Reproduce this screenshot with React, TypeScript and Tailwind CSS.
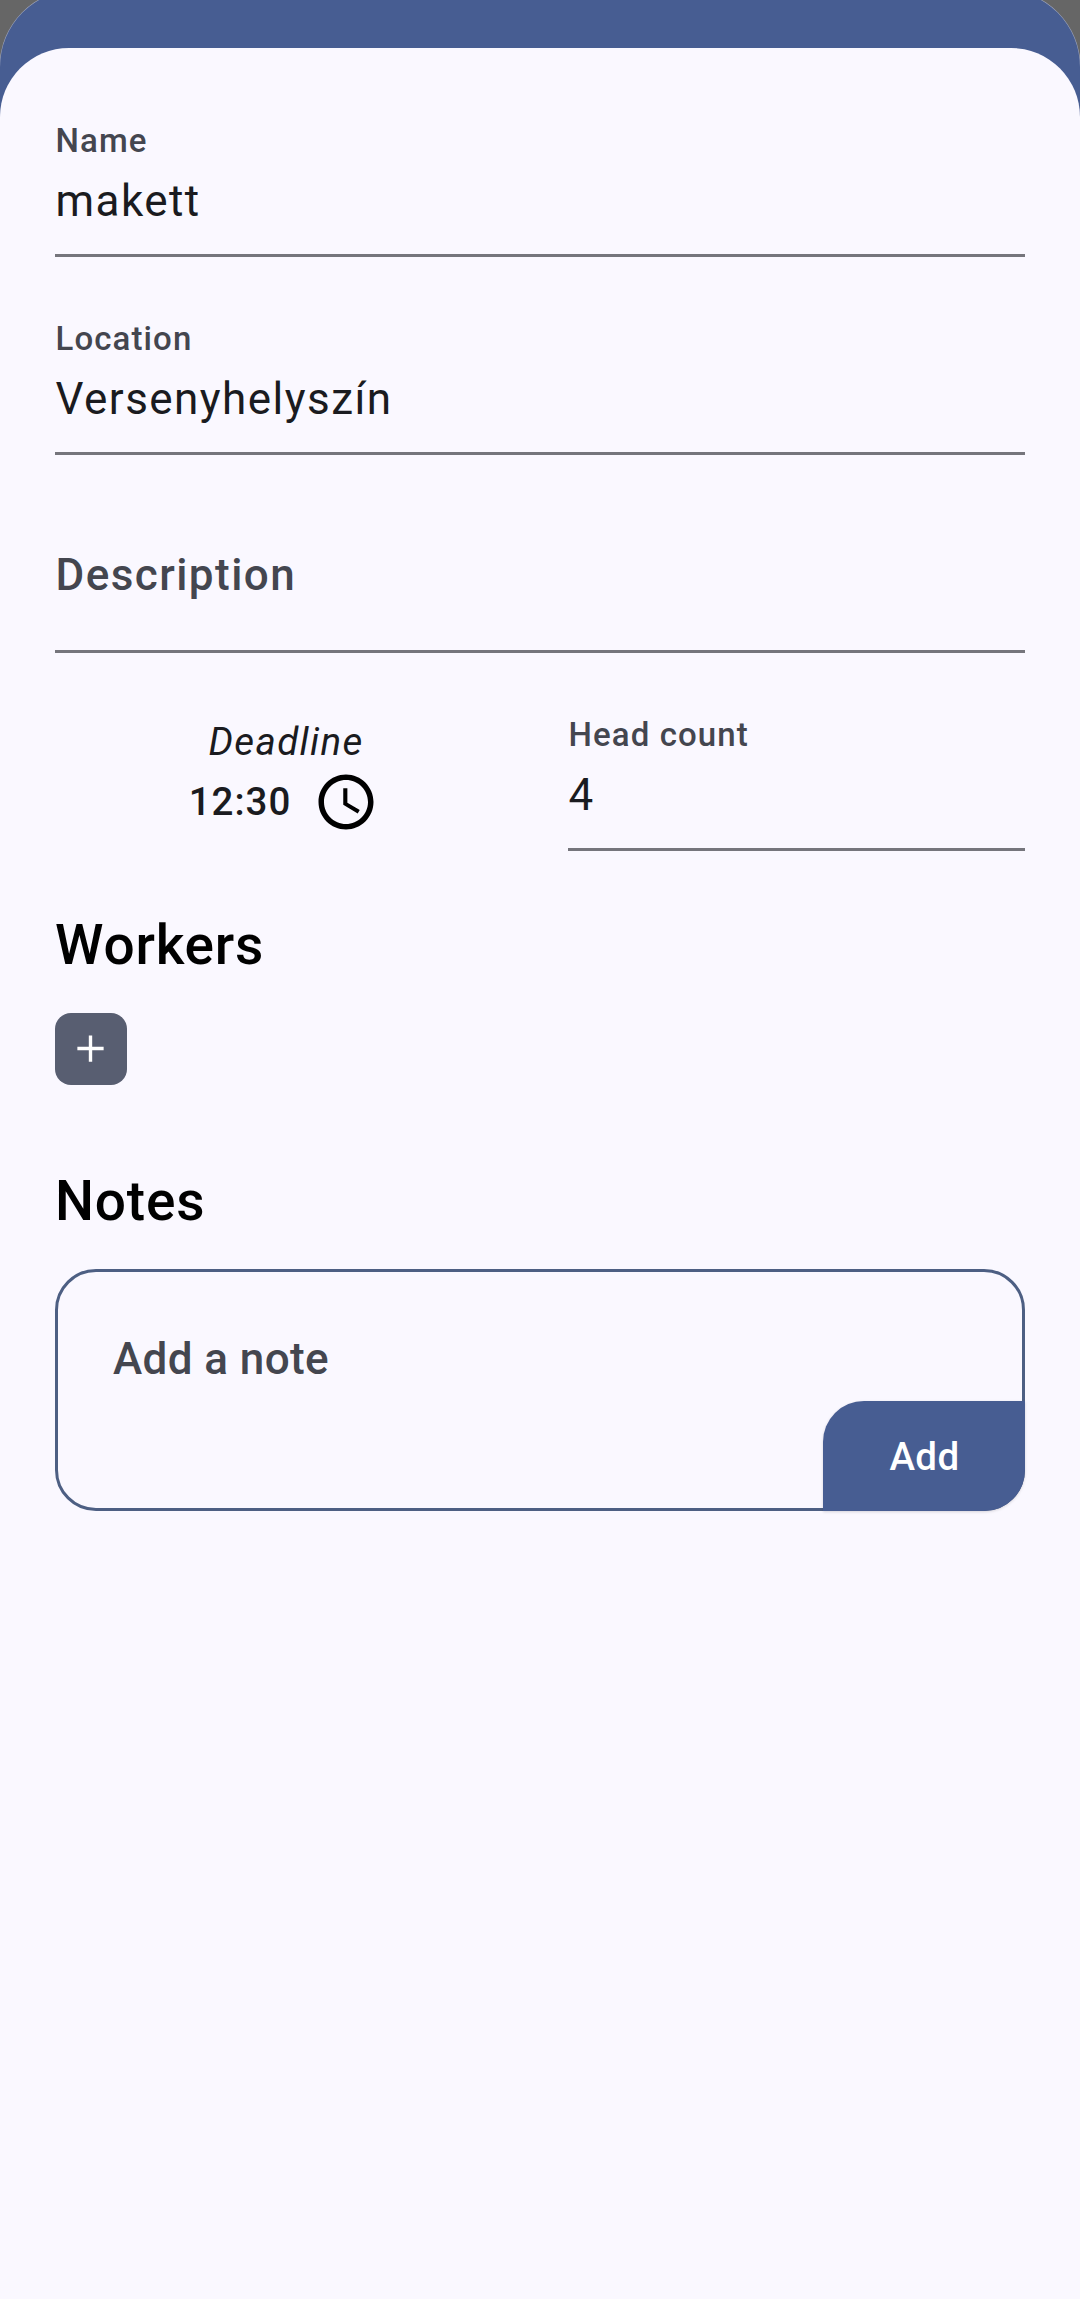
import React from "react";

function Field({ label, value, className = "" }: { label: string; value: string; className?: string }) {
  return (
    <div className={"flex h-[150px] flex-col border-b-[3px] border-[#75757c] pt-[10px] " + className}>
      <span className="h-[48px] pl-[0.5px] text-[33px] leading-[48px] font-medium tracking-[1.1px] text-[#44464f]">{label}</span>
      <span className="mt-[3px] h-[66px] pl-[0.5px] text-[44px] leading-[66px] tracking-[1.45px] text-[#1a1b20]">{value}</span>
    </div>
  );
}

export default function App() {
  return (
    <div className="flow-root h-[2299px] w-[1080px] overflow-hidden bg-[#666666] font-[Roboto,sans-serif] text-black">
      <div className="-mt-[10px] h-[2309px] rounded-t-[77px] bg-[#475d92] pt-[58px] shadow-[0_0_0_0.5px_#a5abc0]">
        <main className="h-[2251px] rounded-t-[69px] bg-[#faf8ff] px-[55px] pt-[59px]">
          <Field label="Name" value="makett" />
          <Field label="Location" value="Versenyhelyszín" className="mt-[48px]" />
          <div className="mt-[48px] flex h-[150px] items-center border-b-[3px] border-[#75757c] pb-[3px] pl-[0.5px] text-[44px] font-medium tracking-[1.45px] text-[#44464f]">Description</div>
          <div className="mt-[48px] flex justify-between">
            <div className="flex w-[458px] flex-col items-center pt-[11px]">
              <span className="h-[57px] pl-[4px] text-[38.5px] leading-[60px] tracking-[1.35px] text-[#1a1b20] italic">Deadline</span>
              <div className="flex items-center gap-[22px]">
                <span className="text-[38.5px] font-medium tracking-[1px] text-[#1a1b20]">12:30</span>
                <svg className="size-[66px]" viewBox="0 0 24 24"><path d="M11.99 2C6.47 2 2 6.48 2 12s4.47 10 9.99 10C17.52 22 22 17.52 22 12S17.52 2 11.99 2zM12 20c-4.42 0-8-3.58-8-8s3.58-8 8-8 8 3.58 8 8-3.58 8-8 8zm.5-13H11v6l5.25 3.15.75-1.23-4.5-2.67z" /></svg>
              </div>
            </div>
            <Field label="Head count" value="4" className="w-[457px]" />
          </div>
          <h2 className="mt-[55px] h-[78px] text-[55px] leading-[78px] font-medium tracking-[0.8px]">Workers</h2>
          <button className="mt-[29px] flex size-[71.5px] items-center justify-center rounded-[16px] bg-[#585e71]">
            <svg className="size-[45px]" viewBox="0 0 24 24" fill="white"><path d="M19 12.9h-6.1V19h-1.8v-6.1H5v-1.8h6.1V5h1.8v6.1H19z" /></svg>
          </button>
          <h2 className="mt-[77.5px] h-[78px] text-[55px] leading-[78px] font-medium tracking-[0.8px]">Notes</h2>
          <div className="relative mt-[29px] flex h-[242px] rounded-[41px] border-[3px] border-[#4d5f83] pt-[54px] pl-[55px]">
            <span className="text-[44px] font-medium tracking-[0.4px] text-[#44464f]">Add a note</span>
            <button className="absolute -right-[3px] -bottom-[3px] h-[110px] w-[202px] rounded-tl-[41px] rounded-br-[41px] bg-[#475d92] pt-[2px] pl-[1px] text-[38.5px] font-medium tracking-[0.4px] text-white shadow-[0_1px_3px_rgba(0,0,0,0.15)]">Add</button>
          </div>
        </main>
      </div>
    </div>
  );
}
